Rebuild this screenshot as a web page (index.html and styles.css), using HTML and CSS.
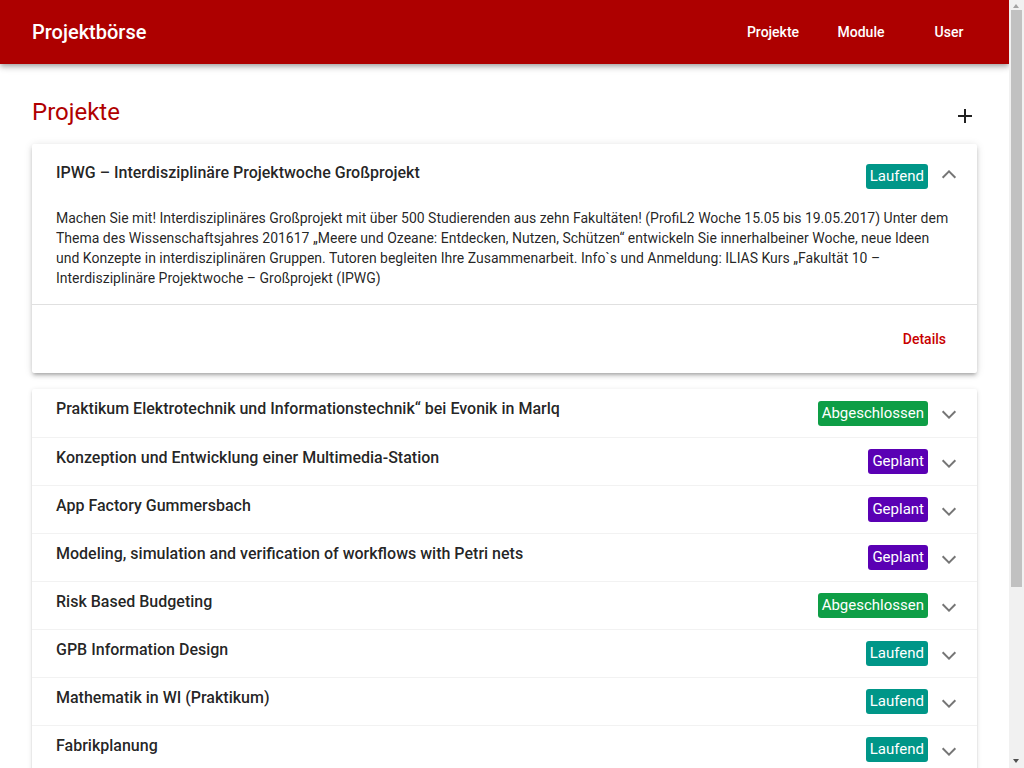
FILE: index.html
```html
<!DOCTYPE html>
<html lang="de">
<head>
<meta charset="utf-8">
<title>Projektbörse</title>
<link rel="stylesheet" href="styles.css">
</head>
<body>
<header class="toolbar">
  <div class="brand">Projektbörse</div>
  <nav class="nav">
    <a class="nav-item">Projekte</a>
    <a class="nav-item">Module</a>
    <a class="nav-item">User</a>
  </nav>
</header>
<main class="main">
  <div class="page-head">
    <h1 class="page-title">Projekte</h1>
    <span class="add-btn"><svg width="24" height="24" viewBox="0 0 24 24"><path d="M19 13h-6v6h-2v-6H5v-2h6V5h2v6h6v2z" fill="#222"/></svg></span>
  </div>

  <section class="panel expanded">
    <div class="panel-header header-lg">
      <span class="panel-title">IPWG – Interdisziplinäre Projektwoche Großprojekt</span>
      <span class="badge laufend">Laufend</span>
      <span class="indicator up"></span>
    </div>
    <div class="panel-body">Machen Sie mit! Interdisziplinäres Großprojekt mit über 500 Studierenden aus zehn Fakultäten! (ProfiL2 Woche 15.05 bis 19.05.2017) Unter dem Thema des Wissenschaftsjahres 201617 „Meere und Ozeane: Entdecken, Nutzen, Schützen“ entwickeln Sie innerhalbeiner Woche, neue Ideen und Konzepte in interdisziplinären Gruppen. Tutoren begleiten Ihre Zusammenarbeit. Info`s und Anmeldung: ILIAS Kurs „Fakultät 10 – Interdisziplinäre Projektwoche – Großprojekt (IPWG)</div>
    <div class="panel-actions"><a class="text-btn">Details</a></div>
  </section>

  <section class="list">
    <div class="panel-header row"><span class="panel-title">Praktikum Elektrotechnik und Informationstechnik“ bei Evonik in Marlq</span><span class="badge done">Abgeschlossen</span><span class="indicator"></span></div>
    <div class="panel-header row"><span class="panel-title">Konzeption und Entwicklung einer Multimedia-Station</span><span class="badge planned">Geplant</span><span class="indicator"></span></div>
    <div class="panel-header row"><span class="panel-title">App Factory Gummersbach</span><span class="badge planned">Geplant</span><span class="indicator"></span></div>
    <div class="panel-header row"><span class="panel-title">Modeling, simulation and verification of workflows with Petri nets</span><span class="badge planned">Geplant</span><span class="indicator"></span></div>
    <div class="panel-header row"><span class="panel-title">Risk Based Budgeting</span><span class="badge done">Abgeschlossen</span><span class="indicator"></span></div>
    <div class="panel-header row"><span class="panel-title">GPB Information Design</span><span class="badge laufend">Laufend</span><span class="indicator"></span></div>
    <div class="panel-header row"><span class="panel-title">Mathematik in WI (Praktikum)</span><span class="badge laufend">Laufend</span><span class="indicator"></span></div>
    <div class="panel-header row"><span class="panel-title">Fabrikplanung</span><span class="badge laufend">Laufend</span><span class="indicator"></span></div>
    <div class="panel-header row"><span class="panel-title">Softwaretechnik Praktikum</span><span class="badge planned">Geplant</span><span class="indicator"></span></div>
    <div class="panel-header row"><span class="panel-title">Webentwicklung mit Angular</span><span class="badge laufend">Laufend</span><span class="indicator"></span></div>
    <div class="panel-header row"><span class="panel-title">Data Science Projekt</span><span class="badge done">Abgeschlossen</span><span class="indicator"></span></div>
    <div class="panel-header row"><span class="panel-title">Smart Home Labor</span><span class="badge planned">Geplant</span><span class="indicator"></span></div>
  </section>
</main>
<div class="scrollbar" aria-hidden="true">
  <span class="sb-arrow sb-up"></span>
  <span class="sb-thumb"></span>
  <span class="sb-arrow sb-down"></span>
</div>
</body>
</html>
```

FILE: styles.css
```css
* { box-sizing: border-box; }
html, body { margin: 0; padding: 0; background: #fff; }
body {
  font-family: Roboto, "Liberation Sans", sans-serif;
  color: rgba(0,0,0,.87);
  margin-right: 15px;
}
.toolbar {
  position: relative;
  z-index: 2;
  height: 64px;
  background: #ad0000;
  color: #fff;
  display: flex;
  align-items: center;
  padding: 0 16px 0 32px;
  box-shadow: 0 2px 4px -1px rgba(0,0,0,.2), 0 4px 5px 0 rgba(0,0,0,.14), 0 1px 10px 0 rgba(0,0,0,.12);
}
.brand {
  font-size: 20px;
  font-weight: 500;
  line-height: 32px;
}
.nav {
  margin-left: auto;
  display: flex;
}
.nav-item {
  width: 88px;
  text-align: center;
  font-size: 14px;
  font-weight: 500;
  line-height: 36px;
  color: #fff;
}
.main {
  padding: 32px 32px 32px;
}
.page-head {
  display: flex;
  justify-content: space-between;
  align-items: flex-end;
  height: 32px;
}
.page-title {
  margin: 0;
  font-size: 24px;
  font-weight: 400;
  line-height: 32px;
  color: #b00000;
}
.add-btn {
  display: block;
  width: 24px;
  height: 24px;
}
.add-btn svg { display: block; }
.panel, .list {
  margin-top: 16px;
  background: #fff;
  border-radius: 2px;
  box-shadow: 0 3px 1px -2px rgba(0,0,0,.2), 0 2px 2px 0 rgba(0,0,0,.14), 0 1px 5px 0 rgba(0,0,0,.12);
}
.panel.expanded {
  box-shadow: 0 3px 3px -2px rgba(0,0,0,.2), 0 3px 4px 0 rgba(0,0,0,.14), 0 1px 8px 0 rgba(0,0,0,.12);
}
.panel-header {
  display: flex;
  align-items: center;
  padding: 0 22px 0 24px;
}
.header-lg { height: 64px; }
.row {
  height: 48px;
  border-top: 1px solid #f2f2f2;
}
.row:first-child { border-top: 0; }
.panel-title {
  font-size: 16px;
  font-weight: 500;
  line-height: 20px;
  padding-bottom: 7px;
  color: rgba(0,0,0,.87);
  white-space: nowrap;
}
.row .panel-title { padding-bottom: 8px; }
.badge {
  margin-left: auto;
  margin-right: 15px;
  font-size: 15px;
  line-height: 21px;
  padding: 2px 4px;
  border-radius: 3px;
  color: #fff;
}
.laufend { background: #009688; }
.done { background: #0e9e46; }
.planned { background: #5a00b4; }
.indicator {
  width: 12px;
  height: 12px;
  display: flex;
  align-items: center;
  justify-content: center;
}
.indicator::after {
  content: "";
  display: block;
  width: 8px;
  height: 8px;
  border-style: solid;
  border-color: rgba(0,0,0,.54);
  border-width: 0 2px 2px 0;
  transform: translateY(-1px) rotate(45deg);
}
.indicator.up::after {
  transform: translateY(1px) rotate(225deg);
}
.panel-body {
  padding: 0 24px 16px;
  font-size: 14px;
  line-height: 20px;
}
.panel-actions {
  border-top: 1px solid rgba(0,0,0,.12);
  display: flex;
  justify-content: flex-end;
  padding: 16px 15px 16px 24px;
}
.text-btn {
  display: block;
  padding: 0 16px;
  min-width: 64px;
  line-height: 36px;
  font-size: 14px;
  font-weight: 500;
  color: #c80000;
  text-align: center;
}
.scrollbar {
  position: fixed;
  top: 0;
  right: 0;
  width: 15px;
  height: 100vh;
  background: #f1f1f1;
  z-index: 5;
}
.sb-thumb {
  position: absolute;
  left: 2px;
  right: 2px;
  top: 10px;
  height: 577px;
  background: #c1c1c1;
}
.sb-arrow {
  position: absolute;
  left: 4px;
  width: 0;
  height: 0;
  border-left: 3.5px solid transparent;
  border-right: 3.5px solid transparent;
}
.sb-up {
  top: 4px;
  border-bottom: 4px solid #a3a3a3;
}
.sb-down {
  bottom: 5px;
  border-top: 4px solid #505050;
}
```
